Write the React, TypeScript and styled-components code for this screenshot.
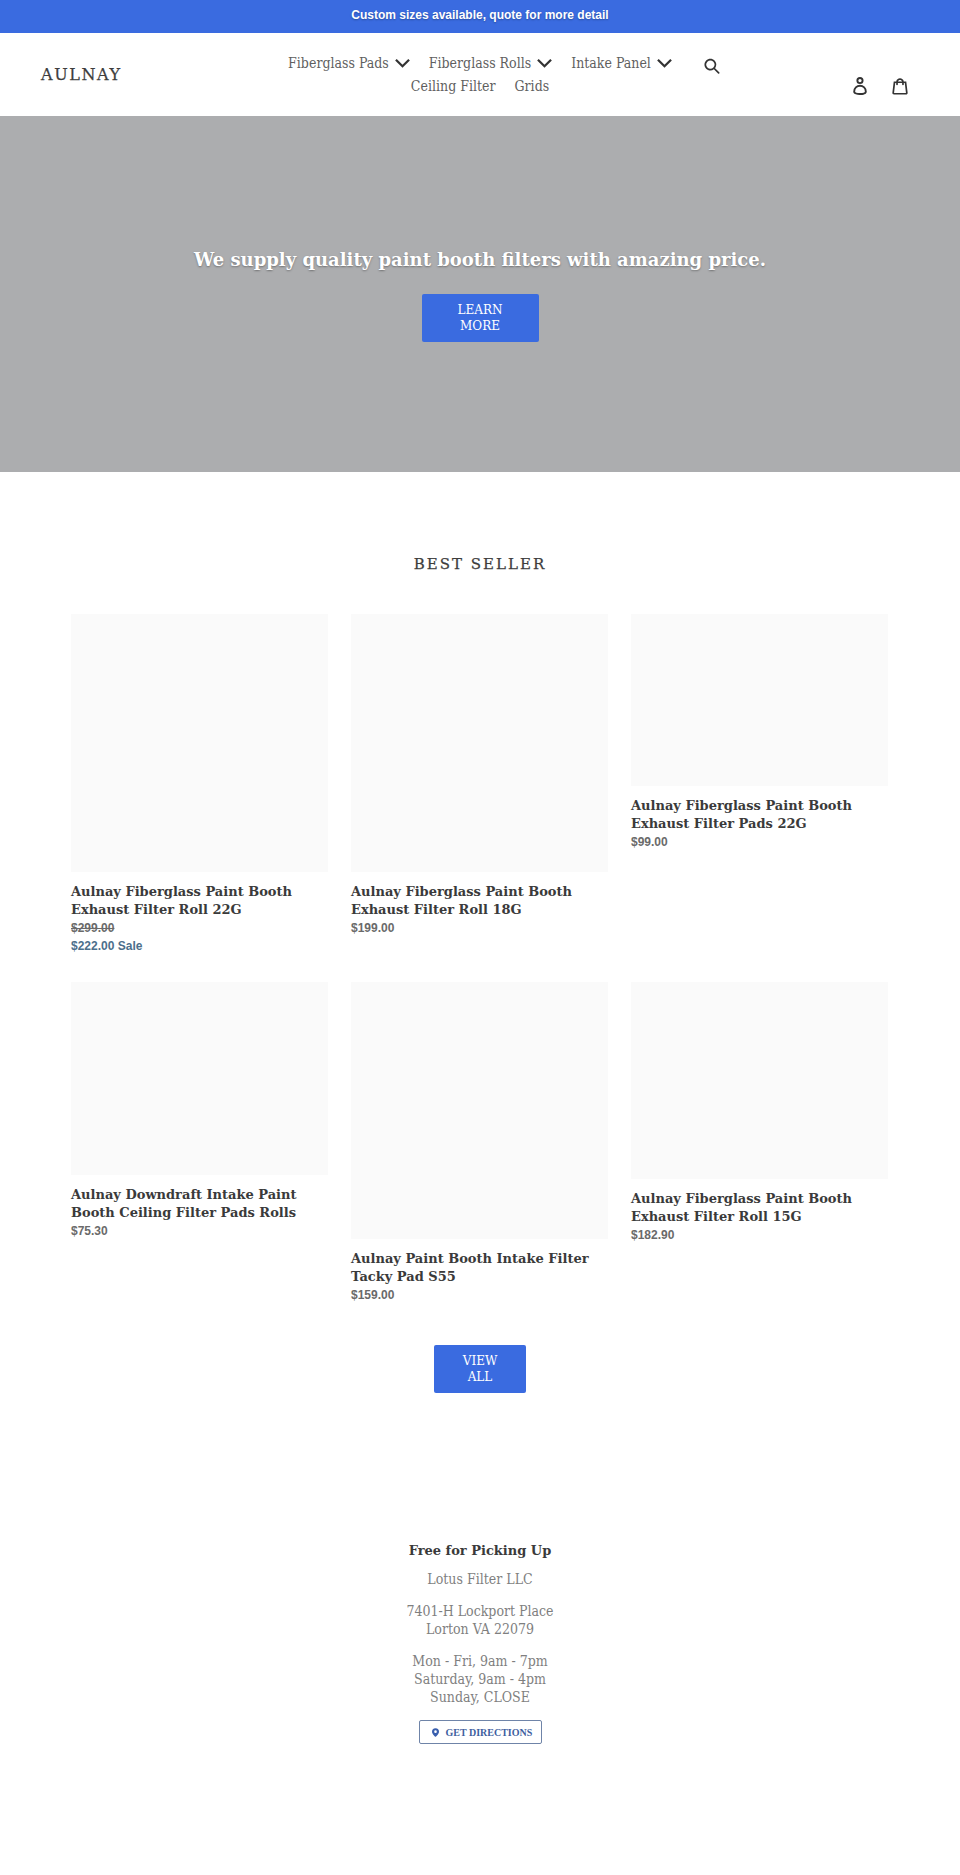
import React from 'react'
import styled, { createGlobalStyle } from 'styled-components'

const GlobalStyle = createGlobalStyle`
  html, body {
    margin: 0;
    padding: 0;
    background: #ffffff;
  }
  body {
    font-family: "DejaVu Serif", serif;
    color: #333333;
  }
  * {
    box-sizing: border-box;
  }
`

const Page = styled.div`
  width: 960px;
  height: 1875px;
  overflow: hidden;
`

const Announcement = styled.div`
  height: 33px;
  background: #3a6be0;
  color: #ffffff;
  font: bold 12px/31px "Liberation Sans", sans-serif;
  text-align: center;
  text-shadow: 0 1px 2px rgba(0, 0, 0, 0.3);
`

const Header = styled.header`
  height: 83px;
  display: grid;
  grid-template-columns: 1fr 400px 1fr;
`

const Logo = styled.a`
  align-self: center;
  padding-left: 41px;
  margin-top: -1px;
  font-size: 16px;
  letter-spacing: 1.6px;
  color: #3d3d3d;
  -webkit-text-stroke: 0.25px #3d3d3d;
`

const Nav = styled.nav`
  display: flex;
  flex-wrap: wrap;
  justify-content: center;
  align-content: flex-start;
  column-gap: 19px;
  padding-top: 18px;
`

const NavItem = styled.a`
  display: flex;
  align-items: center;
  gap: 6px;
  height: 23px;
  font-family: "DejaVu Serif Condensed", "DejaVu Serif", serif;
  font-size: 14px;
  font-weight: 300;
  color: #5f5f5f;
`

const Chevron = styled.svg`
  width: 15px;
  height: 10px;
  fill: none;
  stroke: #333333;
  stroke-width: 2.4;
`

const Tools = styled.div`
  display: flex;
  justify-content: space-between;
  padding: 24px 52px 0 24px;
`

const SearchIcon = styled.svg`
  width: 16px;
  height: 17px;
  fill: #333333;
`

const Account = styled.div`
  display: flex;
  align-items: center;
  gap: 25px;
  height: 38px;
  padding-top: 20px;
`

const LoginIcon = styled.svg`
  width: 14px;
  height: 18px;
  fill: #333333;
`

const CartIcon = styled.svg`
  width: 16px;
  height: 17px;
  fill: #333333;
`

const Hero = styled.section`
  height: 356px;
  background: #acadaf;
  display: flex;
  flex-direction: column;
  align-items: center;
  padding-top: 130px;
`

const HeroTitle = styled.h2`
  margin: 0 0 20px;
  font-size: 18px;
  line-height: 28px;
  font-weight: bold;
  color: #ffffff;
  text-shadow: 0 1px 2px rgba(0, 0, 0, 0.35);
`

const Button = styled.a<{ $width: number }>`
  display: block;
  width: ${p => p.$width}px;
  padding: 8px 20px;
  background: #3a6be0;
  border-radius: 2px;
  color: #ffffff;
  font-size: 12px;
  line-height: 16px;
  text-align: center;
`

const Collection = styled.section`
  padding: 80px 71px 0;
`

const SectionTitle = styled.h2`
  margin: 0 0 38px;
  font-size: 15px;
  line-height: 24px;
  font-weight: normal;
  letter-spacing: 2px;
  text-align: center;
  color: #3d3d3d;
  -webkit-text-stroke: 0.25px #3d3d3d;
`

const Grid = styled.div`
  display: grid;
  grid-template-columns: repeat(3, 257px);
  column-gap: 23px;
  row-gap: 27px;
  align-items: start;
`

const Card = styled.div``

const Thumb = styled.div<{ $height: number }>`
  height: ${p => p.$height}px;
  background: #fafafa;
  margin-bottom: 11px;
`

const Title = styled.div`
  font-size: 13px;
  line-height: 18px;
  font-weight: bold;
  color: #3a3a3a;
`

const Price = styled.div<{ $sale?: boolean; $old?: boolean }>`
  font: bold 12px/18px "Liberation Sans", sans-serif;
  color: ${p => (p.$sale ? '#4c6f8c' : '#6a6a6a')};
  text-decoration: ${p => (p.$old ? 'line-through' : 'none')};
`

const Actions = styled.div`
  display: flex;
  justify-content: center;
  padding-top: 41px;
`

const Pickup = styled.section`
  display: flex;
  flex-direction: column;
  align-items: center;
  padding-top: 149px;
  text-align: center;
`

const PickupTitle = styled.h3`
  margin: 0 0 10px;
  font-size: 13px;
  line-height: 18px;
  font-weight: bold;
  color: #3a3a3a;
`

const PickupText = styled.p`
  margin: 0 0 14px;
  font-family: "DejaVu Serif Condensed", "DejaVu Serif", serif;
  font-size: 14px;
  line-height: 18px;
  font-weight: 300;
  color: #7f7f7f;
`

const Directions = styled.a`
  display: flex;
  align-items: center;
  gap: 7px;
  width: 123px;
  height: 24px;
  padding-left: 12px;
  border: 1px solid #6f84a8;
  border-radius: 2px;
  font: bold 10px "Liberation Serif", serif;
  color: #3f5f9f;
`

const Pin = styled.svg`
  width: 7px;
  height: 9px;
  fill: #3a5fae;
`

const products = [
  { name: 'Aulnay Fiberglass Paint Booth Exhaust Filter Roll 22G', h: 258, old: '$299.00', price: '$222.00' },
  { name: 'Aulnay Fiberglass Paint Booth Exhaust Filter Roll 18G', h: 258, price: '$199.00' },
  { name: 'Aulnay Fiberglass Paint Booth Exhaust Filter Pads 22G', h: 172, price: '$99.00' },
  { name: 'Aulnay Downdraft Intake Paint Booth Ceiling Filter Pads Rolls', h: 193, price: '$75.30' },
  { name: 'Aulnay Paint Booth Intake Filter Tacky Pad S55', h: 257, price: '$159.00' },
  { name: 'Aulnay Fiberglass Paint Booth Exhaust Filter Roll 15G', h: 197, price: '$182.90' },
]

const Down = () => (
  <Chevron viewBox="0 0 16 10">
    <polyline points="1,1.5 8,8.5 15,1.5" />
  </Chevron>
)

export default function App () {
  return (
    <Page>
      <GlobalStyle />
      <Announcement>Custom sizes available, quote for more detail</Announcement>
      <Header>
        <Logo>AULNAY</Logo>
        <Nav>
          <NavItem>Fiberglass Pads <Down /></NavItem>
          <NavItem>Fiberglass Rolls <Down /></NavItem>
          <NavItem>Intake Panel <Down /></NavItem>
          <NavItem>Ceiling Filter</NavItem>
          <NavItem>Grids</NavItem>
        </Nav>
        <Tools>
          <SearchIcon viewBox="0 0 37 40">
            <path d="M35.6 36l-9.8-9.8c4.1-5.4 3.6-13.2-1.3-18.1-5.4-5.4-14.2-5.4-19.7 0-5.4 5.4-5.4 14.2 0 19.7 2.6 2.6 6.1 4.1 9.8 4.1 3 0 5.9-1 8.3-2.8l9.8 9.8c.4.4.9.6 1.4.6s1-.2 1.4-.6c.9-.9.9-2.1.1-2.9zm-20.9-8.2c-2.6 0-5.1-1-7-2.9-3.9-3.9-3.9-10.1 0-14C9.6 9 12.2 8 14.7 8s5.1 1 7 2.9c3.9 3.9 3.9 10.1 0 14-1.9 1.9-4.4 2.9-7 2.9z" />
          </SearchIcon>
          <Account>
            <LoginIcon viewBox="0 0 28.33 37.68">
              <path d="M14.17 14.9a7.45 7.45 0 1 0-7.5-7.45 7.46 7.46 0 0 0 7.5 7.45zm0-10.91a3.45 3.45 0 1 1-3.5 3.46A3.46 3.46 0 0 1 14.17 4zM14.17 16.47A14.18 14.18 0 0 0 0 30.68c0 1.41.66 4 5.11 5.66a27.17 27.17 0 0 0 9.06 1.34c6.54 0 14.17-1.84 14.17-7a14.18 14.18 0 0 0-14.17-14.21zm0 17.21c-6.3 0-10.17-1.77-10.17-3a10.17 10.17 0 1 1 20.33 0c.01 1.23-3.86 3-10.16 3z" />
            </LoginIcon>
            <CartIcon viewBox="0 0 37 40">
              <path d="M36.5 34.8L33.3 8h-5.9C26.7 3.9 23 .8 18.5.8S10.3 3.9 9.6 8H3.7L.5 34.8c-.2 1.5.4 2.4.9 3 .5.5 1.4 1.2 3.1 1.2h28c1.3 0 2.4-.4 3.1-1.3.7-.7 1-1.8.9-2.9zm-18-30c2.2 0 4.1 1.4 4.7 3.2h-9.5c.7-1.9 2.6-3.2 4.8-3.2zM4.5 35l2.8-23h2.2v3c0 1.1.9 2 2 2s2-.9 2-2v-3h10v3c0 1.1.9 2 2 2s2-.9 2-2v-3h2.2l2.8 23h-28z" />
            </CartIcon>
          </Account>
        </Tools>
      </Header>
      <Hero>
        <HeroTitle>We supply quality paint booth filters with amazing price.</HeroTitle>
        <Button $width={117}>LEARN MORE</Button>
      </Hero>
      <Collection>
        <SectionTitle>BEST SELLER</SectionTitle>
        <Grid>
          {products.map(p => (
            <Card key={p.name}>
              <Thumb $height={p.h} />
              <Title>{p.name}</Title>
              {p.old && <Price $old>{p.old}</Price>}
              <Price $sale={!!p.old}>{p.price}{p.old && ' Sale'}</Price>
            </Card>
          ))}
        </Grid>
        <Actions>
          <Button $width={92}>VIEW ALL</Button>
        </Actions>
      </Collection>
      <Pickup>
        <PickupTitle>Free for Picking Up</PickupTitle>
        <PickupText>Lotus Filter LLC</PickupText>
        <PickupText>7401-H Lockport Place<br />Lorton VA 22079</PickupText>
        <PickupText>Mon - Fri, 9am - 7pm<br />Saturday, 9am - 4pm<br />Sunday, CLOSE</PickupText>
        <Directions>
          <Pin viewBox="0 0 8 10">
            <path fillRule="evenodd" d="M4 0a4 4 0 0 0-4 4c0 2.6 4 6 4 6s4-3.400 4-6a4 4 0 0 0-4-4zm0 5.500a1.500 1.500 0 1 1 0-3 1.500 1.500 0 0 1 0 3z" />
          </Pin>
          GET DIRECTIONS
        </Directions>
      </Pickup>
    </Page>
  )
}
